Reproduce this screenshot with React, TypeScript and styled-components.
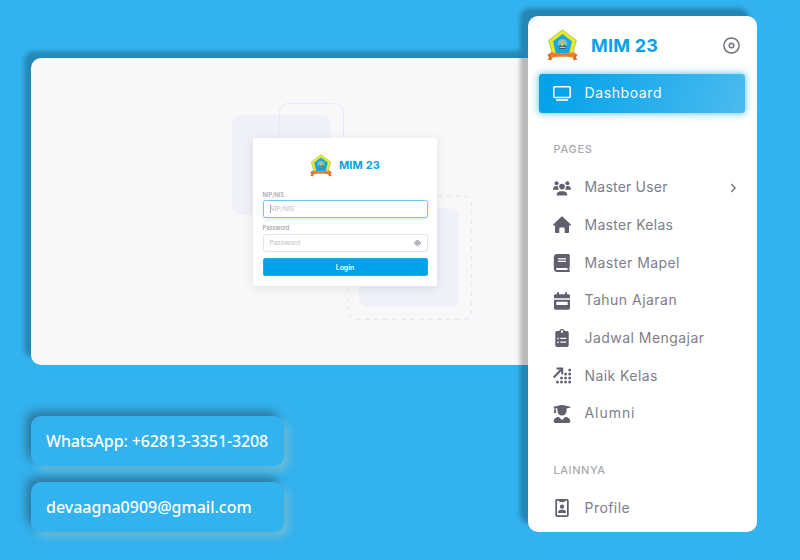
import React from "react";
import styled, { createGlobalStyle, css } from "styled-components";

const BLUE = "#32b2ef";
const BRAND = "#06a1e9";
const INK = "#625f6e";

const GlobalStyle = createGlobalStyle`
  * { box-sizing: border-box; }
  body { margin: 0; background: ${BLUE}; font-family: Inter, "Open Sans", sans-serif; }
`;

const Page = styled.div`
  display: grid;
  grid-template-columns: 497px 229px;
  width: 800px;
  height: 560px;
  padding: 16px 0 0 31px;
  overflow: hidden;
  background: ${BLUE};
`;

const Main = styled.main`
  display: flex;
  flex-direction: column;
  align-items: flex-start;
  padding-top: 42px;
`;

const Hero = styled.section`
  position: relative;
  display: flex;
  width: 100%;
  height: 307px;
  padding: 80px 0 0 222px;
  border-radius: 10px 0 0 10px;
  background: #f8f8f8;
  box-shadow: -7px -7px 4px rgba(0, 0, 0, 0.23);
`;

const Shape = styled.div<{ $x: number; $y: number; $w: number; $h: number; $line?: "solid" }>`
  position: absolute;
  left: ${(p) => p.$x}px;
  top: ${(p) => p.$y}px;
  width: ${(p) => p.$w}px;
  height: ${(p) => p.$h}px;
  border-radius: 9px;
  ${(p) => (p.$line ? css`border: 1px ${p.$line} #e9e9f9;` : css`background: #f0f0f8;`)}
`;

const DashedShape = styled.svg`
  position: absolute;
  left: 316px;
  top: 137px;
`;

const LoginCard = styled.form`
  position: relative;
  display: flex;
  flex-direction: column;
  width: 184px;
  height: 147.5px;
  padding: 16px 9.5px 0;
  border-radius: 2px;
  background: #fff;
  box-shadow: 0 2px 12px rgba(34, 41, 47, 0.1);
`;

const LoginBrand = styled.div`
  display: flex;
  align-items: center;
  justify-content: center;
  gap: 7px;
  height: 23px;
`;

const BrandName = styled.span<{ $size: number; $track?: number }>`
  color: ${BRAND};
  font-size: ${(p) => p.$size}px;
  font-weight: 650;
  line-height: 1;
  letter-spacing: ${(p) => p.$track ?? 0}px;
  white-space: nowrap;
`;

const Label = styled.label<{ $top: number }>`
  height: 8px;
  margin-top: ${(p) => p.$top}px;
  color: #8f8d99;
  font-size: 5.8px;
  line-height: 8px;
`;

const Field = styled.div<{ $focus?: boolean }>`
  display: flex;
  align-items: center;
  height: 18px;
  margin-top: 1.5px;
  padding: 0 6px;
  border: 1px solid ${(p) => (p.$focus ? "#69c8f4" : "#e3e2e7")};
  border-radius: 2.5px;
  color: #bfbec6;
  font-size: 6.7px;
  box-shadow: ${(p) => (p.$focus ? "0 1px 3px rgba(34,41,47,.12)" : "none")};
`;

const Caret = styled.span`
  width: 1px;
  height: 8px;
  margin-right: -1px;
  background: #999;
`;

const FieldText = styled.span`
  flex: 1;
`;

const LoginButton = styled.button`
  height: 18px;
  margin-top: 6.5px;
  padding: 0;
  border: 1px solid #1fabec;
  border-radius: 2px;
  background: #02a1e9;
  color: #fff;
  font: 600 6.9px/15px Inter, sans-serif;
`;

const Contact = styled.div<{ $top: number; $track: number }>`
  width: 253px;
  height: 50px;
  margin-top: ${(p) => p.$top}px;
  padding-left: 15px;
  border-radius: 10px;
  background: ${BLUE};
  box-shadow: -5px -5px 8px rgba(45, 85, 105, 0.6), 5px 5px 8px rgba(165, 200, 195, 0.5);
  color: #fff;
  font: 500 16px/50px "Noto Sans", sans-serif;
  letter-spacing: ${(p) => p.$track}px;
  white-space: nowrap;
`;

const Sidebar = styled.aside`
  position: relative;
  display: flex;
  flex-direction: column;
  height: 516px;
  padding: 0 12px 0 11px;
  border-radius: 10px;
  background: #fff;
  box-shadow: -8px -8px 4px rgba(0, 0, 0, 0.25);
`;

const SidebarHead = styled.header`
  display: flex;
  align-items: center;
  height: 58px;
  padding: 0 5px 0 8px;
  gap: 13px;
`;

const Grow = styled.div`
  flex: 1;
  display: flex;
  align-items: center;
  padding-top: 1px;
`;

const NavItem = styled.a<{ $active?: boolean }>`
  display: flex;
  align-items: center;
  flex: none;
  height: ${(p) => (p.$active ? 38.5 : 37.7)}px;
  padding: 0 7px 0 14px;
  gap: 13.5px;
  color: ${INK};
  font-size: 14px;
  border-radius: 3px;
  ${(p) =>
    p.$active &&
    css`
      color: #fff;
      background: linear-gradient(110deg, #02a2e9 5%, #4bbbef);
      box-shadow: 0 0 7px 1px rgba(40, 177, 240, 0.65);
    `}
`;

const NavText = styled.span<{ $active?: boolean; $track: number }>`
  flex: 1;
  padding-bottom: 0.6px;
  color: ${(p) => (p.$active ? "#f4fbff" : "#807e8a")};
  font-weight: 375;
  line-height: 18px;
  letter-spacing: ${(p) => p.$track}px;
  white-space: nowrap;
`;

const Heading = styled.h2<{ $top: number; $gap: number; $track: number }>`
  height: 14px;
  margin: ${(p) => p.$top}px 0 ${(p) => p.$gap}px 14.5px;
  color: #aaa8b1;
  font-size: 11px;
  font-weight: 500;
  line-height: 14px;
  letter-spacing: ${(p) => p.$track}px;
`;

const Logo = ({ size }: { size: number }) => (
  <svg width={size} height={size * 1.06} viewBox="0 0 31 33">
    <path d="M15.5 .2 29.9 11.2 25.9 26H5.1L1.1 11.2Z" fill="#a9cf5c" />
    <path d="M15.5 1.3 28.7 11.5 25 25H6L2.3 11.5Z" fill="#efe928" />
    <path d="M15.5 4.6 25.4 12.2 22.600 24H8.4L5.6 12.2Z" fill="#8cc75a" />
    <path d="M15.5 5.4 24.7 12.5 22 24H9L6.3 12.5Z" fill="#1ba6e2" />
    <circle cx="15.5" cy="14.8" r="4.800" fill="#63c3e6" />
    <path d="M15.5 10.500 17.500 13 17 16h-3l-.5-3Z" fill="#e5bd31" />
    <path d="M11.500 17.500c1.500-2.300 3-.8 4 .2 1-2.600 3-2 4-.2l-1 2.500h-6Z" fill="#2a6272" />
    <path d="M12.500 18.500h6" stroke="#dfc842" strokeWidth="1.200" />
    <path d="M.5 25.500 5 23.500v5.500l-1 3-1.500-1-2 .2 1.500-2.500ZM30.500 25.500 26 23.500v5.500l1 3 1.500-1 2 .2-1.500-2.500Z" fill="#e2631b" />
    <path d="M3.500 23.200c7 1.400 17 1.400 24 0v6c-7-1.700-17-1.700-24 0Z" fill="#f28429" />
    <path d="M6 26.300c6-.8 13-.8 19 0" fill="none" stroke="#d07030" strokeWidth="1.300" strokeDasharray="1.500 .5" />
  </svg>
);

const Glyph = ({ children }: { children: React.ReactNode }) => (
  <svg width="18" height="18" viewBox="0 0 18 18" fill="currentColor">{children}</svg>
);

const Screen = () => (
  <Glyph>
    <rect x=".8" y="2.800" width="16.400" height="10.600" rx=".8" fill="none" stroke="currentColor" strokeWidth="1.500" />
    <path d="M3 15.200h12v1.600H3z" />
  </Glyph>
);

const Users = () => (
  <Glyph>
    <circle cx="3.600" cy="4.200" r="2" />
    <circle cx="14.400" cy="4.200" r="2" />
    <circle cx="9" cy="7.600" r="2.800" />
    <path d="M0 10.700c0-2.500 1.200-3.800 3.200-3.800.8 0 1.500.2 2 .6-.3 1.200 0 2.300.8 3.200ZM18 10.700c0-2.500-1.200-3.800-3.200-3.800-.8 0-1.500.2-2 .6.3 1.200 0 2.300-.8 3.200ZM3.700 16.500c0-3 1.600-4.300 4-4.300h2.600c2.400 0 4 1.300 4 4.300Z" />
  </Glyph>
);

const House = () => (
  <Glyph>
    <path d="M8.100.9c.5-.5 1.300-.5 1.800 0l7.900 7.500c.5.600.2 1.200-.5 1.200H16v6.300c0 .7-.4 1.100-1.100 1.100h-3.200v-4.200c0-.8-.4-1.200-1.200-1.200h-3c-.8 0-1.200.4-1.200 1.200V17H3.100C2.400 17 2 16.600 2 15.900V9.600H.7C0 9.600-.3 9 .2 8.400Z" />
  </Glyph>
);

const Book = () => (
  <Glyph>
    <path fillRule="evenodd" d="M4 0h11.300c1 0 1.500.5 1.500 1.500V13c0 .5-.2.800-.5 1v2c.5.200.6.5.6.900 0 .7-.4 1.100-1.100 1.100H4c-2 0-3.200-1.300-3.200-3.200V3.200C.8 1.300 2 0 4 0Zm1 4.200v1.200h8V4.200Zm0 2.600V8h8V6.800ZM4 14c-1.300 0-1.300 2 0 2h10.500v-2Z" />
  </Glyph>
);

const Calendar = () => (
  <Glyph>
    <path fillRule="evenodd" d="M4 .2h2v2h6v-2h2v2h1.400c1 0 1.600.6 1.600 1.600v2.500H1V3.800c0-1 .6-1.600 1.600-1.600H4ZM1 7.700h16v8.400c0 1-.7 1.700-1.700 1.700H2.700c-1 0-1.700-.7-1.700-1.700Zm2.300 2v3.300h11.400V9.700Z" />
  </Glyph>
);

const Clipboard = () => (
  <Glyph>
    <path fillRule="evenodd" d="M4 2h2.300C6.600.7 7.600 0 9 0s2.400.7 2.700 2H14c1 0 1.700.7 1.700 1.700v12.600c0 1-.7 1.700-1.700 1.700H4c-1 0-1.700-.7-1.700-1.700V3.700C2.300 2.700 3 2 4 2Zm5-.7a1.200 1.200 0 1 0 0 2.400 1.200 1.200 0 0 0 0-2.400ZM4.300 8.700v1.600h1.500V8.700Zm3 0v1.400h6V8.700Zm-3 3.700V14h1.500v-1.600Zm3 0v1.400h6v-1.400Z" />
  </Glyph>
);

const DOTS = [[16.7, 3], [16.7, 7], [12.6, 7], [16.7, 11], [12.6, 11], [8.5, 11], [16.7, 15], [12.6, 15], [8.5, 15], [4.4, 15]];
const Growth = () => (
  <Glyph>
    <path d="m.7 10.500 7.300-7.700M3.500 1.500h5.700v5.700" fill="none" stroke="currentColor" strokeWidth="2" />
    {DOTS.map(([x, y]) => <rect key={`${x}-${y}`} x={x - 1.3} y={y - 1.2} width="2.600" height="2.600" rx=".8" />)}
  </Glyph>
);

const Graduate = () => (
  <Glyph>
    <path d="M.7 1.700 8.300.1c.5-.1.900-.1 1.400 0l7.600 1.600c.5.100.5.700 0 .8l-3.700.9v2.200c0 3-1.900 5-4.600 5s-4.600-2-4.600-5V3.400l-1.700-.4v2c.6.400.6 1 .1 1.400L3.200 8H.8l.5-1.600c-.5-.4-.5-1 .1-1.400V2.700l-.7-.2c-.4-.1-.4-.7 0-.8ZM5.500 11.700 9 14.900l3.500-3.200c2.700.3 4.800 2 4.800 4.500v.4c0 .8-.6 1.400-1.400 1.400H2.100c-.8 0-1.400-.6-1.400-1.400v-.4c0-2.500 2.100-4.200 4.800-4.500Z" />
  </Glyph>
);

const Badge = () => (
  <Glyph>
    <path fillRule="evenodd" d="M4 0h10c1 0 1.700.7 1.700 1.700v14.600c0 1-.7 1.700-1.700 1.700H4c-1 0-1.700-.7-1.700-1.700V1.700C2.300.7 3 0 4 0Zm0 1.800v14.500h10V1.800h-2.300v1.100H6.300V1.800Z" />
    <circle cx="9" cy="7.700" r="2.100" />
    <path d="M5 14c0-2.400 1.200-3.200 3-3.200h2c1.800 0 3 .8 3 3.200Z" />
  </Glyph>
);

const Pages = [
  { text: "Master User", track: 0.2, icon: <Users />, chevron: true },
  { text: "Master Kelas", track: 0.28, icon: <House /> },
  { text: "Master Mapel", track: 0.42, icon: <Book /> },
  { text: "Tahun Ajaran", track: 0.48, icon: <Calendar /> },
  { text: "Jadwal Mengajar", track: 0.46, icon: <Clipboard /> },
  { text: "Naik Kelas", track: 0.42, icon: <Growth /> },
  { text: "Alumni", track: 0.95, icon: <Graduate /> },
];

export default function App() {
  return (
    <>
      <GlobalStyle />
      <Page>
        <Main>
          <Hero>
            <Shape $x={201} $y={57} $w={99} $h={100} />
            <Shape $x={248} $y={45} $w={65} $h={65} $line="solid" />
            <DashedShape width="125" height="125" fill="none">
              <rect x=".5" y=".5" width="124" height="124" rx="9" stroke="#e7e7f7" strokeWidth="1.300" strokeDasharray="4.500 4.500" />
            </DashedShape>
            <Shape $x={328} $y={150} $w={100} $h={99} />
            <LoginCard>
              <LoginBrand>
                <Logo size={22} />
                <BrandName $size={11} $track={0.15}>MIM 23</BrandName>
              </LoginBrand>
              <Label $top={13.5}>NIP/NIS</Label>
              <Field $focus><Caret /><FieldText>NIP/NIS</FieldText></Field>
              <Label $top={6}>Password</Label>
              <Field>
                <FieldText>Password</FieldText>
                <svg width="7" height="6" viewBox="0 0 14 12" fill="none" stroke="#686572" strokeWidth="1.600">
                  <path d="M1 6c3-6 9-6 12 0-3 6-9 6-12 0Z" />
                  <circle cx="7" cy="6" r="2" />
                </svg>
              </Field>
              <LoginButton type="button">Login</LoginButton>
            </LoginCard>
          </Hero>
          <Contact $top={51} $track={-0.13}>WhatsApp: +62813-3351-3208</Contact>
          <Contact $top={16} $track={0}>devaagna0909@gmail.com</Contact>
        </Main>
        <Sidebar>
          <SidebarHead>
            <Logo size={31} />
            <Grow><BrandName $size={18} $track={0.2}>MIM 23</BrandName></Grow>
            <svg width="17" height="17" viewBox="0 0 17 17" fill="none" stroke="#777482" strokeWidth="1.500">
              <circle cx="8.500" cy="8.500" r="7.600" />
              <circle cx="8.500" cy="8.500" r="2.300" />
            </svg>
          </SidebarHead>
          <NavItem $active>
            <Screen />
            <NavText $active $track={0.6}>Dashboard</NavText>
          </NavItem>
          <Heading $top={29.5} $gap={12.8} $track={0.7}>PAGES</Heading>
          {Pages.map((p) => (
            <NavItem key={p.text}>
              {p.icon}
              <NavText $track={p.track}>{p.text}</NavText>
              {p.chevron && (
                <svg width="10" height="10" viewBox="0 0 10 10" fill="none" stroke="#737080" strokeWidth="1.300">
                  <path d="m3.200 1 4 4-4 4" />
                </svg>
              )}
            </NavItem>
          ))}
          <Heading $top={30} $gap={12.5} $track={0.55}>LAINNYA</Heading>
          <NavItem>
            <Badge />
            <NavText $track={0.45}>Profile</NavText>
          </NavItem>
        </Sidebar>
      </Page>
    </>
  );
}
